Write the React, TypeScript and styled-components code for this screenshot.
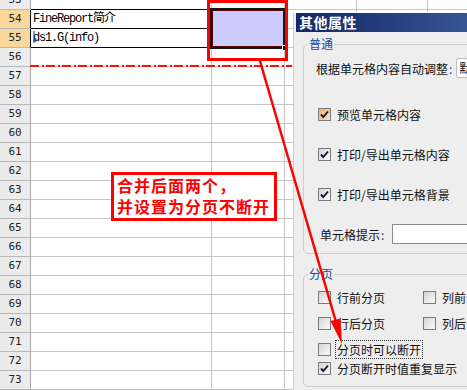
import React from "react";
import styled, { createGlobalStyle } from "styled-components";

const Global = createGlobalStyle`
  html, body { margin: 0; padding: 0; background: #fff; }
  body { width: 467px; height: 390px; overflow: hidden; }
  * { box-sizing: border-box; }
`;

const Root = styled.div`
  position: relative;
  width: 467px;
  height: 390px;
  overflow: hidden;
  background: #fff;
`;

/* ---------- spreadsheet ---------- */
const Sheet = styled.div`
  display: flex;
  flex-direction: column;
  margin-top: -9px;
`;

const Row = styled.div`
  display: flex;
  height: 19px;
  flex: none;
`;

const RowHead = styled.div<{ $sel?: boolean }>`
  width: 31px;
  height: 19px;
  flex: none;
  background: ${(p) => (p.$sel ? "#f9d89c" : "#ececec")};
  border-right: 1px solid ${(p) => (p.$sel ? "#000" : "#a9a9a9")};
  border-bottom: 1px solid #b8b8b8;
  font: 11px/18px "DejaVu Sans Mono", monospace;
  color: #222;
  text-align: center;
`;

const Cell = styled.div<{ $w: number; $edge?: boolean }>`
  position: relative;
  width: ${(p) => p.$w}px;
  height: 19px;
  flex: none;
  border-right: 1px solid #c6c6c6;
  border-bottom: 1px solid ${(p) => (p.$edge ? "#000" : "#c6c6c6")};
  padding-left: 2px;
  font: 12px/18px "Liberation Mono", "Noto Sans CJK SC", monospace;
  letter-spacing: -1.2px;
  color: #000;
  white-space: nowrap;
  overflow: hidden;
`;

const Cursor = styled.svg`
  position: absolute;
  left: 2px;
  top: 1px;
`;

const MergedSelection = styled.div`
  position: absolute;
  left: 210px;
  top: 8px;
  width: 76px;
  height: 41px;
  border: 2px solid #141414;
  background: #ccccff;
  box-shadow: inset 0 0 0 1px #5c0000;
`;

const Handle = styled.span`
  position: absolute;
  right: -4px;
  bottom: -4px;
  width: 6px;
  height: 6px;
  background: #141428;
  border: 1px solid #fff;
`;

const PageBreak = styled.div`
  position: absolute;
  left: 30px;
  top: 65px;
  width: 262px;
  height: 2px;
  background: repeating-linear-gradient(
    90deg,
    #ff1010 0 9px,
    transparent 9px 12px,
    #ff1010 12px 14px,
    transparent 14px 16px
  );
`;

/* ---------- annotations ---------- */
const RedFrame = styled.div`
  position: absolute;
  left: 207px;
  top: 0;
  width: 81px;
  height: 61px;
  border: 3px solid #ff0000;
`;

const Callout = styled.div`
  position: absolute;
  left: 111px;
  top: 172px;
  width: 166px;
  height: 49px;
  border: 3px solid #ff0000;
  background: #fff;
  padding: 0 0 0 3px;
  color: #ff0000;
  font: bold 16px/21px "Noto Sans CJK SC", sans-serif;
  letter-spacing: 1px;
  white-space: nowrap;
`;

const ArrowLayer = styled.svg`
  position: absolute;
  left: 0;
  top: 0;
  pointer-events: none;
`;

/* ---------- properties panel ---------- */
const Panel = styled.section`
  position: absolute;
  left: 293px;
  top: 12px;
  width: 200px;
  height: 378px;
  background: #eeeeee;
  border-left: 1px solid #cfcfcf;
  border-top: 1px solid #ffffff;
  padding-left: 2px;
  display: flex;
  flex-direction: column;
  font-family: "Noto Sans CJK SC", sans-serif;
  font-size: 12px;
  color: #111;
`;

const TitleBar = styled.header`
  height: 19px;
  flex: none;
  background: linear-gradient(90deg, #13276a 0%, #2a4684 60%, #3b5c9b 100%);
  color: #fff;
  font-weight: bold;
  font-size: 14px;
  line-height: 19px;
  padding-left: 3px;
  letter-spacing: 0.5px;
`;

const Body = styled.div`
  padding: 4px 0 0 7px;
  display: flex;
  flex-direction: column;
`;

const Group = styled.fieldset<{ $gapTop?: number }>`
  margin: ${(p) => p.$gapTop ?? 0}px 0 0 0;
  min-width: 0;
  width: 230px;
  border: 1px solid #cdcdcd;
  border-radius: 5px;
  padding: 6px 0 ${(p) => (p.$gapTop ? 8 : 9)}px 0;
`;

const Legend = styled.legend`
  margin-left: 4px;
  padding: 0 1px;
  font-size: 12px;
  line-height: 16px;
  color: #1f4699;
`;

const Stack = styled.div`
  display: flex;
  flex-direction: column;
  gap: 20px;
`;

const Line = styled.div<{ $indent: number; $after?: number }>`
  display: flex;
  align-items: center;
  height: 20px;
  padding-left: ${(p) => p.$indent}px;
  margin-bottom: ${(p) => p.$after ?? 0}px;
  white-space: nowrap;
`;

const Colon = styled.span`
  color: #1f4699;
  margin-left: 1px;
`;

const Combo = styled.div`
  margin-left: 4px;
  width: 60px;
  height: 20px;
  background: #fff;
  border: 1px solid #bdbdbd;
  border-radius: 2px;
  padding-left: 2px;
  line-height: 18px;
  font-size: 12px;
`;

const TextInput = styled.div`
  margin-left: 8px;
  width: 120px;
  height: 20px;
  background: #fff;
  border: 1px solid #8c8c8c;
`;

const PageGrid = styled.div`
  display: grid;
  grid-template-columns: 105px 105px;
  row-gap: 7px;
  padding-left: 14px;
`;

const PageList = styled.div`
  display: flex;
  flex-direction: column;
  padding-left: 14px;
  margin-top: 7px;
`;

const CheckRow = styled.div`
  display: flex;
  align-items: center;
  gap: 2px;
  height: 19px;
  white-space: nowrap;
`;

const Box = styled.span<{ $hot?: boolean }>`
  width: 13px;
  height: 13px;
  flex: none;
  display: inline-flex;
  align-items: center;
  justify-content: center;
  margin-right: 2px;
  border: 1px solid #7b7b7b;
  background: ${(p) =>
    p.$hot
      ? "linear-gradient(135deg, #f1b070, #fde2c4)"
      : "linear-gradient(135deg, #d4d4d4, #fbfbfb)"};
`;

const Label = styled.span<{ $focus?: boolean }>`
  padding: 0 1px;
  line-height: 17px;
  border: 1px ${(p) => (p.$focus ? "dotted #333" : "solid transparent")};
`;

const Tick = () => (
  <svg width="11" height="11" viewBox="0 0 11 11">
    <path d="M2 5.5 L4.3 8 L9 2.5" stroke="#14183a" strokeWidth="1.9" fill="none" />
  </svg>
);

const Check = ({
  checked,
  hot,
  focus,
  children,
}: {
  checked?: boolean;
  hot?: boolean;
  focus?: boolean;
  children: React.ReactNode;
}) => (
  <CheckRow>
    <Box $hot={hot}>{checked && <Tick />}</Box>
    <Label $focus={focus}>{children}</Label>
  </CheckRow>
);

const widths = [181, 73, 72, 71, 120];
const rows = Array.from({ length: 22 }, (_, i) => 53 + i);

export default function App() {
  return (
    <Root>
      <Global />
      <Sheet>
        {rows.map((r) => {
          const sel = r === 54 || r === 55;
          return (
            <Row key={r}>
              <RowHead $sel={sel}>{r}</RowHead>
              {widths.map((w, ci) => (
                <Cell key={ci} $w={w} $edge={ci === 0 && r >= 53 && r <= 55}>
                  {ci === 0 && r === 54 && "FineReport简介"}
                  {ci === 0 && r === 55 && (
                    <>
                      ds1.G(info)
                      <Cursor width="5" height="15" viewBox="0 0 5 15">
                        <path d="M1 1 V13" stroke="#2a4fb0" strokeWidth="1.2" />
                        <ellipse cx="2" cy="10" rx="1.6" ry="2" fill="#2a4fb0" />
                      </Cursor>
                    </>
                  )}
                </Cell>
              ))}
            </Row>
          );
        })}
      </Sheet>

      <MergedSelection>
        <Handle />
      </MergedSelection>
      <PageBreak />

      <Panel>
        <TitleBar>其他属性</TitleBar>
        <Body>
          <Group>
            <Legend>普通</Legend>
            <Stack>
              <Line $indent={12} $after={6}>
                根据单元格内容自动调整<Colon>:</Colon>
                <Combo>默认</Combo>
              </Line>
              <Line $indent={14}>
                <Check checked hot>
                  预览单元格内容
                </Check>
              </Line>
              <Line $indent={14}>
                <Check checked>打印/导出单元格内容</Check>
              </Line>
              <Line $indent={14}>
                <Check checked>打印/导出单元格背景</Check>
              </Line>
              <Line $indent={16}>
                单元格提示<Colon>:</Colon>
                <TextInput />
              </Line>
            </Stack>
          </Group>
          <Group $gapTop={12}>
            <Legend>分页</Legend>
            <PageGrid>
              <Check>行前分页</Check>
              <Check>列前分页</Check>
              <Check>行后分页</Check>
              <Check>列后分页</Check>
            </PageGrid>
            <PageList>
              <Check focus>分页时可以断开</Check>
              <Check checked>分页断开时值重复显示</Check>
            </PageList>
          </Group>
        </Body>
      </Panel>

      <RedFrame />
      <Callout>
        合并后面两个，
        <br />
        并设置为分页不断开
      </Callout>
      <ArrowLayer width="467" height="390" viewBox="0 0 467 390">
        <line x1="260" y1="61" x2="336" y2="322" stroke="#ff0000" strokeWidth="2.5" />
        <polygon points="342,344 330.5,321 340.5,318.5" fill="#ff0000" />
      </ArrowLayer>
    </Root>
  );
}
